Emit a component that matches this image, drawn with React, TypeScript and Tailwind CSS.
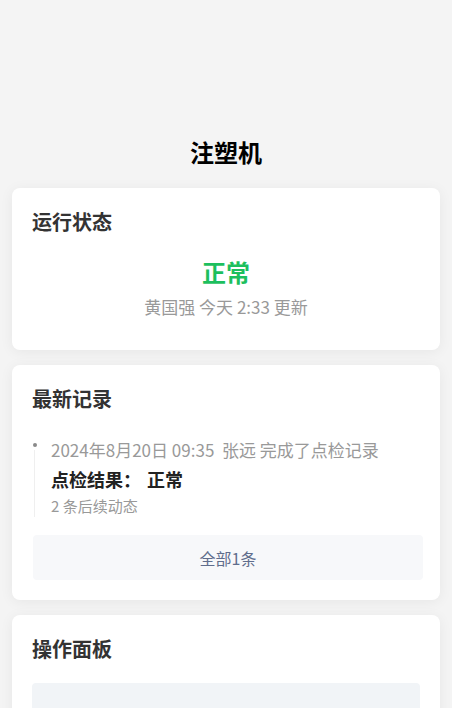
import React from "react";

const font = { fontFamily: '"Noto Sans CJK SC", "Noto Sans", sans-serif' };

function Card({ title, children, className = "" }: { title: string; children?: React.ReactNode; className?: string }) {
  return (
    <div className={`bg-white rounded-lg px-5 pt-5 shadow-[0_2px_14px_rgba(0,0,0,0.06)] ${className}`}>
      <h2 className="text-[20px] leading-[28px] font-bold text-[#333]">{title}</h2>
      {children}
    </div>
  );
}

export default function App() {
  return (
    <div className="min-h-screen bg-[#f4f4f4] overflow-hidden" style={font}>
      <div className="pt-[136px] px-3">
        <h1 className="text-center text-[24px] leading-[32px] font-bold text-black">注塑机</h1>

        <div className="mt-5 flex flex-col gap-[15px]">
          {/* 运行状态 */}
          <Card title="运行状态" className="pb-[31px]">
            <div className="mt-5 text-center">
              <p className="text-[24px] leading-[32px] font-bold text-[#1dbf5e]">正常</p>
              <p className="mt-[7px] text-[17px] leading-[24px] text-[#999]">黄国强 今天 2:33 更新</p>
            </div>
          </Card>

          {/* 最新记录 */}
          <Card title="最新记录" className="pb-5">
            <div className="mt-[25px] relative pl-[18px] ml-[1px]">
              <div className="absolute left-[1px] top-[12px] bottom-0 w-px bg-[#efefef]" />
              <div className="absolute left-0 top-[5px] w-[4px] h-[4px] rounded-full bg-[#8a8a8a]" />
              <p className="text-[17px] leading-[24px] text-[#999] whitespace-nowrap">2024年8月20日 09:35&nbsp; 张远 完成了点检记录</p>
              <p className="mt-[4px] text-[18px] leading-[26px] font-bold text-[#222]">
                点检结果：<span className="ml-[6px]">正常</span>
              </p>
              <p className="mt-[3px] text-[15px] leading-[22px] text-[#999]">2 条后续动态</p>
            </div>
            <button className="mt-[18px] ml-[1px] w-[390px] h-[45px] rounded bg-[#f7f8fa] text-[16px] text-[#5f6d8c]">
              全部1条
            </button>
          </Card>

          {/* 操作面板 */}
          <Card title="操作面板" className="pb-5">
            <div className="mt-[20px] h-[120px] rounded bg-[#f1f4f7]" />
          </Card>
        </div>
      </div>
    </div>
  );
}
